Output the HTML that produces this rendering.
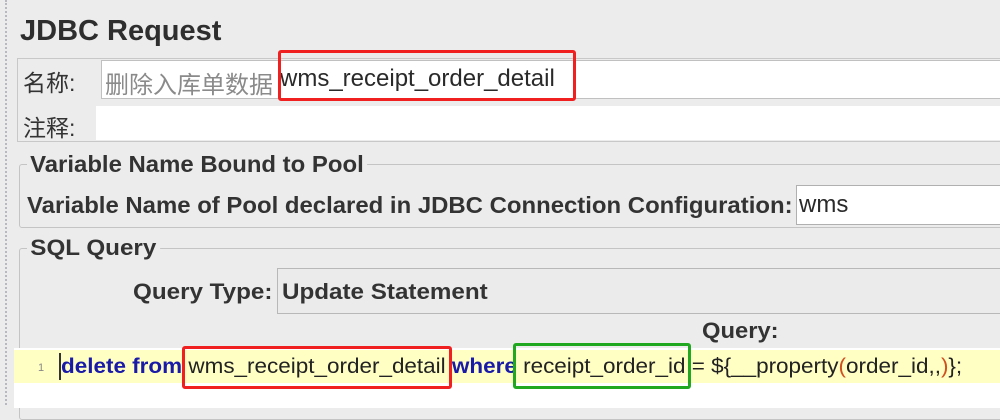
<!DOCTYPE html>
<html><head><meta charset="utf-8"><style>
body{margin:0;width:1000px;height:405px;background:#ececec;position:relative;overflow:hidden;font-family:"Liberation Sans","Noto Sans CJK SC",sans-serif;color:#333}
.a{position:absolute;white-space:nowrap}
.b{font-weight:bold}
</style></head><body>
<div class="a" style="left:5px;top:0;width:0;height:405px;border-left:2px dotted #b8b8c0"></div>
<div class="a b" style="left:20px;top:15px;font-size:29px;color:#2e2e2e">JDBC Request</div>
<div class="a" style="left:17px;top:58px;width:990px;height:82px;border:1px solid #c8c8c8"></div>
<div class="a" style="left:23px;top:64px;font-size:23px;color:#333">名称:</div>
<div class="a" style="left:101px;top:60px;width:910px;height:37px;background:#fff;border:1px solid #c0c0c0"></div>
<div class="a" style="left:105px;top:65px;font-size:24px;color:#8a8a8a">删除入库单数据</div>
<div class="a" style="left:280px;top:65px;font-size:24px;color:#2a2a2a">wms_receipt_order_detail</div>
<div class="a" style="left:278px;top:50px;width:292px;height:45px;border:3px solid #f02020;border-radius:3px"></div>
<div class="a" style="left:23px;top:109px;font-size:23px">注释:</div>
<div class="a" style="left:96px;top:106px;width:910px;height:34px;background:#fff"></div>
<div class="a" style="left:19px;top:164px;width:990px;height:62px;border:1px solid #c4c4c4;border-radius:3px"></div>
<div class="a b" style="left:27px;top:151px;font-size:23px;background:#ececec;padding:0 3px;transform:scaleX(1.04);transform-origin:left">Variable Name Bound to Pool</div>
<div class="a b" style="left:27px;top:192px;font-size:23px;transform:scaleX(1.04);transform-origin:left">Variable Name of Pool declared in JDBC Connection Configuration:</div>
<div class="a" style="left:796px;top:185px;width:210px;height:38px;background:#fff;border:1px solid #b0b0b0"></div>
<div class="a" style="left:799px;top:191px;font-size:24px;color:#2a2a2a">wms</div>
<div class="a" style="left:19px;top:248px;width:990px;height:170px;border:1px solid #c4c4c4;border-radius:3px"></div>
<div class="a b" style="left:27px;top:235px;font-size:22px;background:#ececec;padding:0 3px;transform:scaleX(1.1);transform-origin:left">SQL Query</div>
<div class="a b" style="left:133px;top:279px;font-size:22px;transform:scaleX(1.1);transform-origin:left">Query Type:</div>
<div class="a" style="left:277px;top:268px;width:730px;height:44px;border:1px solid #b8b8b8;background:#ebebeb"></div>
<div class="a b" style="left:282px;top:279px;font-size:22px;transform:scaleX(1.1);transform-origin:left">Update Statement</div>
<div class="a b" style="left:702px;top:318px;font-size:22px;transform:scaleX(1.08);transform-origin:left">Query:</div>
<div class="a" style="left:14px;top:348px;width:990px;height:60px;background:#fff"></div>
<div class="a" style="left:14px;top:350px;width:990px;height:33px;background:#ffffc4"></div>
<div class="a" style="left:59px;top:353px;width:2px;height:27px;background:#333"></div>
<div class="a" style="left:38px;top:362px;font-size:11px;color:#888">1</div>
<div class="a" style="left:61px;top:355px;font-size:21px;transform:scaleX(1.07);transform-origin:left;color:#222"><span style="color:#1a1aa8;font-weight:bold">delete from</span> wms_receipt_order_detail <span style="color:#1a1aa8;font-weight:bold">where</span> receipt_order_id = ${__property<span style="color:#d05020">(</span>order_id,,<span style="color:#d05020">)</span>};</div>
<div class="a" style="left:182px;top:346px;width:264px;height:37px;border:3px solid #f02020;border-radius:3px"></div>
<div class="a" style="left:513px;top:343px;width:172px;height:40px;border:3px solid #20a820;border-radius:3px"></div>
</body></html>
